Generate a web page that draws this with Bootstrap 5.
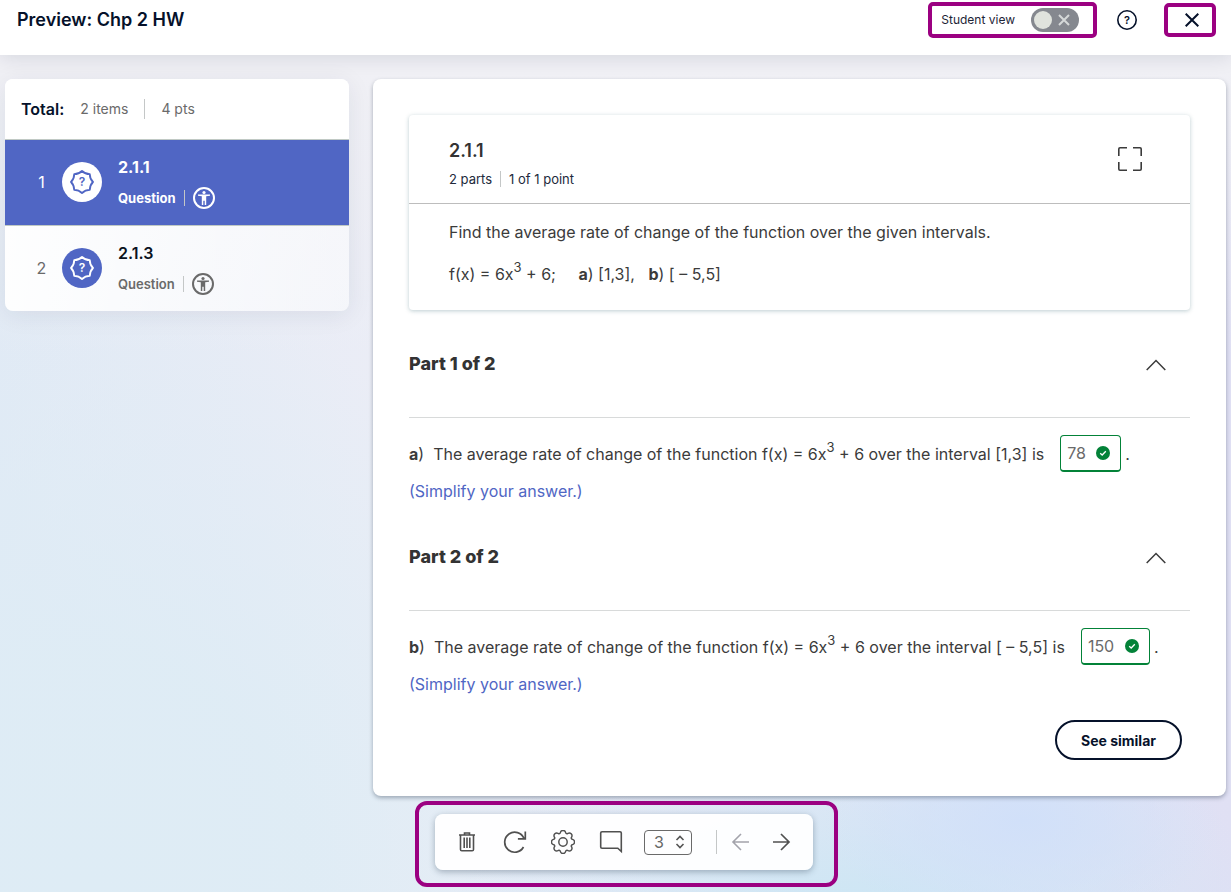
<!DOCTYPE html>
<html lang="en">
<head>
<meta charset="utf-8">
<meta name="viewport" content="width=device-width, initial-scale=1">
<title>Preview: Chp 2 HW</title>
<link href="https://cdn.jsdelivr.net/npm/bootstrap@5.3.0/dist/css/bootstrap.min.css" rel="stylesheet">
<style>
:root { --ink: #05112a; --body: #3b3b3b; --muted: #6a6a6a; --indigo: #5066c4; --plum: #9b0081; --ok: #038238; }
body {
  font-family: Inter, "Liberation Sans", sans-serif; font-size: 16px; line-height: 24px; color: var(--body);
  background:
    radial-gradient(ellipse 200px 110px at 83% 92%, #d1e0f9 0%, #d1e0f900 100%),
    radial-gradient(ellipse 420px 220px at 70% 104%, #cae6f4 0%, #cae6f400 100%),
    radial-gradient(ellipse 560px 600px at 7% 100%, #deecf5 0%, #deecf5e6 40%, #deecf500 100%),
    linear-gradient(180deg, #f0f0f5 0%, #f0f0f5 8%, #f0f0f500 40%),
    linear-gradient(90deg, #e1eaf5 0%, #ebedf6 32%, #e6e5f5 75%, #e0e0f4 100%);
  background-attachment: fixed;
}
svg { display: block; fill: none; stroke: currentColor; }
svg text { fill: currentColor; stroke: none; font-weight: 600; text-anchor: middle; }
.icon-btn { padding: 0; border: 0; background: none; color: inherit; }
.top-bar { height: 55px; background: #fff; padding: 0 15px 15px 17px; box-shadow: 0 2px 20px #0a1c301f; }
.top-bar h1 { font-size: 18px; line-height: 36px; font-weight: 600; color: var(--ink); }
.callout { border: 4px solid var(--plum); border-radius: 5px; }
.callout-view { height: 36px; padding: 0 14px 0 9px; margin-right: 20px; font-size: 12px; color: #1d2436; }
.callout-close { width: 52px; height: 34px; margin-left: 27px; color: var(--ink); padding-left: 3px; }
.view-switch.form-check-input {
  width: 48px; height: 24px; margin: 0; border: 0; border-radius: 12px; background-color: #85888f;
  background-image: url("data:image/svg+xml,%3Csvg xmlns='http://www.w3.org/2000/svg' viewBox='0 0 48 24'%3E%3Ccircle cx='12' cy='12' r='9' fill='%23e0e3dd'/%3E%3Cpath d='M28 7l10 10M38 7L28 17' stroke='%23d5d8d8' stroke-width='2'/%3E%3C/svg%3E");
  background-size: 48px 24px; background-position: 0 0;
}
.side-panel { width: 344px; border-radius: 8px; overflow: hidden; background: linear-gradient(90deg, #fffffff2, #ffffff80); box-shadow: 0 4px 24px #14284614; }
.side-total { height: 60px; padding: 0 16px; background: #fff; }
.side-total strong { font-size: 16px; font-weight: 600; color: var(--ink); }
.side-total span { font-size: 14px; color: var(--muted); }
.rule { width: 1px; background: #c4c7c7; }
.side-item { height: 86px; padding: 0 0 1px; border-top: 1px solid #c0c9c4; color: var(--muted); text-decoration: none; }
.side-item .idx { width: 57px; padding-left: 16px; text-align: center; }
.side-item .disc { width: 40px; height: 40px; border-radius: 50%; background: var(--indigo); color: #fff; }
.side-item .name { font-weight: 600; color: #0a1220; line-height: 24px; margin-bottom: 7px; }
.side-item .kind { font-size: 13px; font-weight: 600; line-height: 24px; }
.side-item.active { background: var(--indigo); color: #fff; }
.side-item.active .disc { background: #fff; color: var(--indigo); }
.side-item.active .name, .side-item.active .kind { color: #fff; font-weight: 700; }
.work-area { padding: 24px 5px 0; gap: 24px; }
.sheet { min-width: 0; background: #fff; border-radius: 8px; padding: 36px; box-shadow: 0 2px 4px #32405566; }
.prompt { border-radius: 4px; box-shadow: 0 1px 4px #5a828c66; }
.prompt-head { padding: 24px 48px 12px 40px; height: 88px; }
.prompt-head h2 { font-size: 18px; line-height: 24px; font-weight: 600; color: #333; }
.prompt-head p { font-size: 13px; line-height: 16px; color: #222a3b; }
.prompt-body { padding: 16px 40px 24px; border-top: 1px solid #bdbdbd; height: 107px; }
.prompt-body p { margin: 0 0 18px; }
sup { font-size: 13px; line-height: 0; top: -8px; vertical-align: baseline; }
.part-head { height: 70px; margin-top: 38px; padding-right: 24px; border-bottom: 1px solid #d8dada; }
.part-head h2 { font-size: 18px; line-height: 32px; font-weight: 800; color: #333; }
.part-head button { padding-top: 11px; }
.part-line { height: 37px; margin: 17px 0 7px; }
.answer { height: 37px; border: 1px solid var(--ok); border-bottom-width: 2px; border-radius: 4px; padding: 0 10px 0 6px; }
.answer input { border: 0; padding: 0; background: none; color: var(--muted); outline: 0; width: 29px; }
.answer .wide-val { width: 37px; }
.hint { color: var(--indigo); }
.btn-similar { width: 127px; height: 40px; border: 2px solid var(--ink); border-radius: 20px; font-size: 14px; font-weight: 700; color: var(--ink); padding: 0; }
.callout-tools { border: 4px solid var(--plum); border-radius: 12px; padding: 9px 21px 13px 16px; margin: 5px 0 5px 22px; }
.tools { height: 56px; padding: 0 20px; border-radius: 8px; background: #fffffff2; color: #505050; box-shadow: 0 2px 6px #3c506466; }
.tries.form-select {
  width: 48px; height: 25px; margin-left: -3px; padding: 0 0 0 9px; border: 1px solid #6a6a6a; border-radius: 4px; color: #666; line-height: 23px;
  background: url("data:image/svg+xml,%3Csvg xmlns='http://www.w3.org/2000/svg' viewBox='0 0 10 14' fill='none' stroke='%23555' stroke-width='1.6'%3E%3Cpath d='M1.5 5L5 1.500 8.500 5M1.500 9L5 12.500 8.500 9'/%3E%3C/svg%3E") right 6px center / 10px 14px no-repeat;
}
</style>
</head>
<body>
<svg class="d-none" aria-hidden="true">
  <symbol id="seal" viewBox="0 0 24 24"><path stroke-width="1.800" stroke-linejoin="round" d="M12 1Q15.200 4.200 19.800 4.200 19.800 8.800 23 12 19.800 15.200 19.800 19.800 15.200 19.800 12 23 8.800 19.800 4.200 19.800 4.200 15.200 1 12 4.200 8.800 4.200 4.200 8.800 4.200 12 1Z"/></symbol>
  <symbol id="access" viewBox="0 0 22 22"><circle cx="11" cy="11" r="10" stroke-width="2"/><circle cx="11" cy="5.500" r="1.600" fill="currentColor" stroke="none"/><path d="M5 7.500h12v1.200l-3.800.6V18h-1.500v-4.200h-1.400V18H8.800V9.300L5 8.700z" fill="currentColor" stroke="none"/></symbol>
  <symbol id="up" viewBox="0 0 20 12"><path d="M.7 11L10 1.500 19.300 11" stroke-width="1.500"/></symbol>
  <symbol id="tick" viewBox="0 0 14 14"><circle cx="7" cy="7" r="7" fill="#038238" stroke="none"/><path d="M4.200 7.200l2 1.800 3.600-3.800" stroke="#fff" stroke-width="1.300"/></symbol>
</svg>

<header class="top-bar d-flex align-items-center">
  <h1 class="m-0 me-auto">Preview: Chp 2 HW</h1>
  <div class="callout callout-view d-flex align-items-center">
    <label for="studentView" class="me-3">Student view</label>
    <input class="form-check-input view-switch" type="checkbox" role="switch" id="studentView">
  </div>
  <button class="icon-btn" type="button" aria-label="Help">
    <svg width="20" height="20" viewBox="0 0 20 20" color="#05112a"><circle cx="10" cy="10" r="9.200" stroke-width="1.600"/><text x="10" y="14" font-size="11">?</text></svg>
  </button>
  <button class="icon-btn callout callout-close d-flex align-items-center justify-content-center" type="button" aria-label="Close">
    <svg width="14" height="14" viewBox="0 0 14 14"><path d="M.7.7l12.600 12.600M13.300.7L.7 13.300" stroke-width="2"/></svg>
  </button>
</header>

<main class="work-area d-flex align-items-start">
  <nav class="side-panel flex-shrink-0" aria-label="Assignment items">
    <div class="side-total d-flex align-items-center gap-3">
      <strong>Total:</strong><span>2 items</span><i class="rule" style="height:20px"></i><span>4 pts</span>
    </div>
    <a href="#" class="side-item active d-flex align-items-center" aria-current="true">
      <span class="idx">1</span>
      <span class="disc d-flex align-items-center justify-content-center me-3"><svg width="24" height="24" viewBox="0 0 24 24"><use href="#seal"/><text x="12" y="16" font-size="12">?</text></svg></span>
      <span>
        <span class="name d-block">2.1.1</span>
        <span class="d-flex align-items-center gap-2"><span class="kind">Question</span><i class="rule" style="height:16px"></i><svg width="22" height="22"><use href="#access"/></svg></span>
      </span>
    </a>
    <a href="#" class="side-item d-flex align-items-center">
      <span class="idx">2</span>
      <span class="disc d-flex align-items-center justify-content-center me-3"><svg width="24" height="24" viewBox="0 0 24 24"><use href="#seal"/><text x="12" y="16" font-size="12">?</text></svg></span>
      <span>
        <span class="name d-block">2.1.3</span>
        <span class="d-flex align-items-center gap-2"><span class="kind">Question</span><i class="rule" style="height:16px"></i><svg width="22" height="22"><use href="#access"/></svg></span>
      </span>
    </a>
  </nav>

  <section class="sheet flex-grow-1">
    <article class="prompt">
      <div class="prompt-head d-flex justify-content-between">
        <div>
          <h2 class="m-0 mb-2">2.1.1</h2>
          <p class="m-0 d-flex gap-2"><span>2 parts</span><i class="rule"></i><span>1 of 1 point</span></p>
        </div>
        <button class="icon-btn align-self-start mt-2" type="button" aria-label="Full screen">
          <svg width="24" height="24" viewBox="0 0 24 24"><path d="M9 .8H2Q.8.800.8 2v7M15 .8h7q1.200 0 1.200 1.200v7M9 23.200H2Q.8 23.200.8 22v-7M15 23.200h7q1.200 0 1.200-1.200v-7" stroke-width="1.600"/></svg>
        </button>
      </div>
      <div class="prompt-body">
        <p>Find the average rate of change of the function over the given intervals.</p>
        <p>f(x) = 6x<sup>3</sup> + 6; &nbsp; &nbsp; <b>a</b>) [1,3], &nbsp; <b>b</b>) [ – 5,5]</p>
      </div>
    </article>

    <div class="part-head d-flex justify-content-between">
      <h2 class="m-0">Part 1 of 2</h2>
      <button class="icon-btn align-self-start" type="button" data-bs-toggle="collapse" data-bs-target="#part1" aria-label="Collapse part 1"><svg width="20" height="12"><use href="#up"/></svg></button>
    </div>
    <div id="part1" class="collapse show">
      <div class="part-line d-flex align-items-center">
        <label for="ans1" class="me-3"><b>a</b>) &nbsp;The average rate of change of the function f(x) = 6x<sup>3</sup> + 6 over the interval [1,3] is</label>
        <span class="answer d-inline-flex align-items-center"><input id="ans1" value="78" readonly><svg width="14" height="14"><use href="#tick"/></svg></span><span class="ms-1">.</span>
      </div>
      <p class="hint m-0">(Simplify your answer.)</p>
    </div>

    <div class="part-head d-flex justify-content-between">
      <h2 class="m-0">Part 2 of 2</h2>
      <button class="icon-btn align-self-start" type="button" data-bs-toggle="collapse" data-bs-target="#part2" aria-label="Collapse part 2"><svg width="20" height="12"><use href="#up"/></svg></button>
    </div>
    <div id="part2" class="collapse show">
      <div class="part-line d-flex align-items-center">
        <label for="ans2" class="me-3"><b>b</b>) &nbsp;The average rate of change of the function f(x) = 6x<sup>3</sup> + 6 over the interval [ – 5,5] is</label>
        <span class="answer d-inline-flex align-items-center"><input id="ans2" class="wide-val" value="150" readonly><svg width="14" height="14"><use href="#tick"/></svg></span><span class="ms-1">.</span>
      </div>
      <p class="hint m-0">(Simplify your answer.)</p>
    </div>
    <div class="d-flex justify-content-end pe-2 mt-4"><button class="btn btn-similar" type="button">See similar</button></div>
  </section>
</main>

<footer class="d-flex justify-content-center">
  <div class="callout-tools">
    <div class="tools d-flex align-items-center gap-4" role="toolbar" aria-label="Question tools">
      <button class="icon-btn" type="button" aria-label="Delete"><svg width="24" height="24" viewBox="0 0 24 24"><path d="M4 5h16M9.500 4.500V3h5v1.500M5.500 5.500v14q0 1.300 1.300 1.300h10.400q1.300 0 1.300-1.300v-14M9.200 7.500V18M12 7.500V18M14.800 7.500V18" stroke-width="1.600"/></svg></button>
      <button class="icon-btn" type="button" aria-label="Redo"><svg width="24" height="24" viewBox="0 0 24 24"><path d="M21 8.500A10 10 0 1 0 20.500 17M22.300 1.500v7.400h-7.400" stroke-width="1.700"/></svg></button>
      <button class="icon-btn" type="button" aria-label="Settings"><svg width="24" height="24" viewBox="-.3 -.3 16.600 16.600"><circle cx="8" cy="8" r="2.900"/><path d="M9.796 1.343c-.527-1.790-3.065-1.790-3.592 0l-.094.319a.873.873 0 0 1-1.255.520l-.292-.160c-1.640-.892-3.433.902-2.540 2.541l.159.292a.873.873 0 0 1-.520 1.255l-.319.094c-1.790.527-1.790 3.065 0 3.592l.319.094a.873.873 0 0 1 .520 1.255l-.160.292c-.892 1.640.901 3.434 2.541 2.540l.292-.159a.873.873 0 0 1 1.255.520l.094.319c.527 1.790 3.065 1.790 3.592 0l.094-.319a.873.873 0 0 1 1.255-.520l.292.160c1.640.893 3.434-.902 2.540-2.541l-.159-.292a.873.873 0 0 1 .520-1.255l.319-.094c1.790-.527 1.790-3.065 0-3.592l-.319-.094a.873.873 0 0 1-.520-1.255l.160-.292c.893-1.640-.902-3.433-2.541-2.540l-.292.159a.873.873 0 0 1-1.255-.520z"/></svg></button>
      <button class="icon-btn" type="button" aria-label="Comment"><svg width="24" height="24" viewBox="0 0 24 24"><path d="M22.300 21.500l-3.500-3.300H3Q1.700 18.200 1.700 17V3Q1.700 1.800 3 1.800h18q1.300 0 1.300 1.200z" stroke-width="1.600"/></svg></button>
      <select class="form-select tries" aria-label="Number of tries"><option>3</option></select>
      <div class="d-flex align-items-center">
        <i class="rule me-2" style="height:24px"></i>
        <button class="icon-btn ms-1 me-3" type="button" aria-label="Previous" disabled><svg width="24" height="24" viewBox="0 0 24 24" color="#a3a3ab"><path d="M20 12H4.500M12 4l-8 8 8 8" stroke-width="1.600"/></svg></button>
        <button class="icon-btn" type="button" aria-label="Next"><svg width="24" height="24" viewBox="0 0 24 24"><path d="M4 12h15.500M12 4l8 8-8 8" stroke-width="1.700"/></svg></button>
      </div>
    </div>
  </div>
</footer>
<script src="https://cdn.jsdelivr.net/npm/bootstrap@5.3.0/dist/js/bootstrap.bundle.min.js"></script>
</body>
</html>
